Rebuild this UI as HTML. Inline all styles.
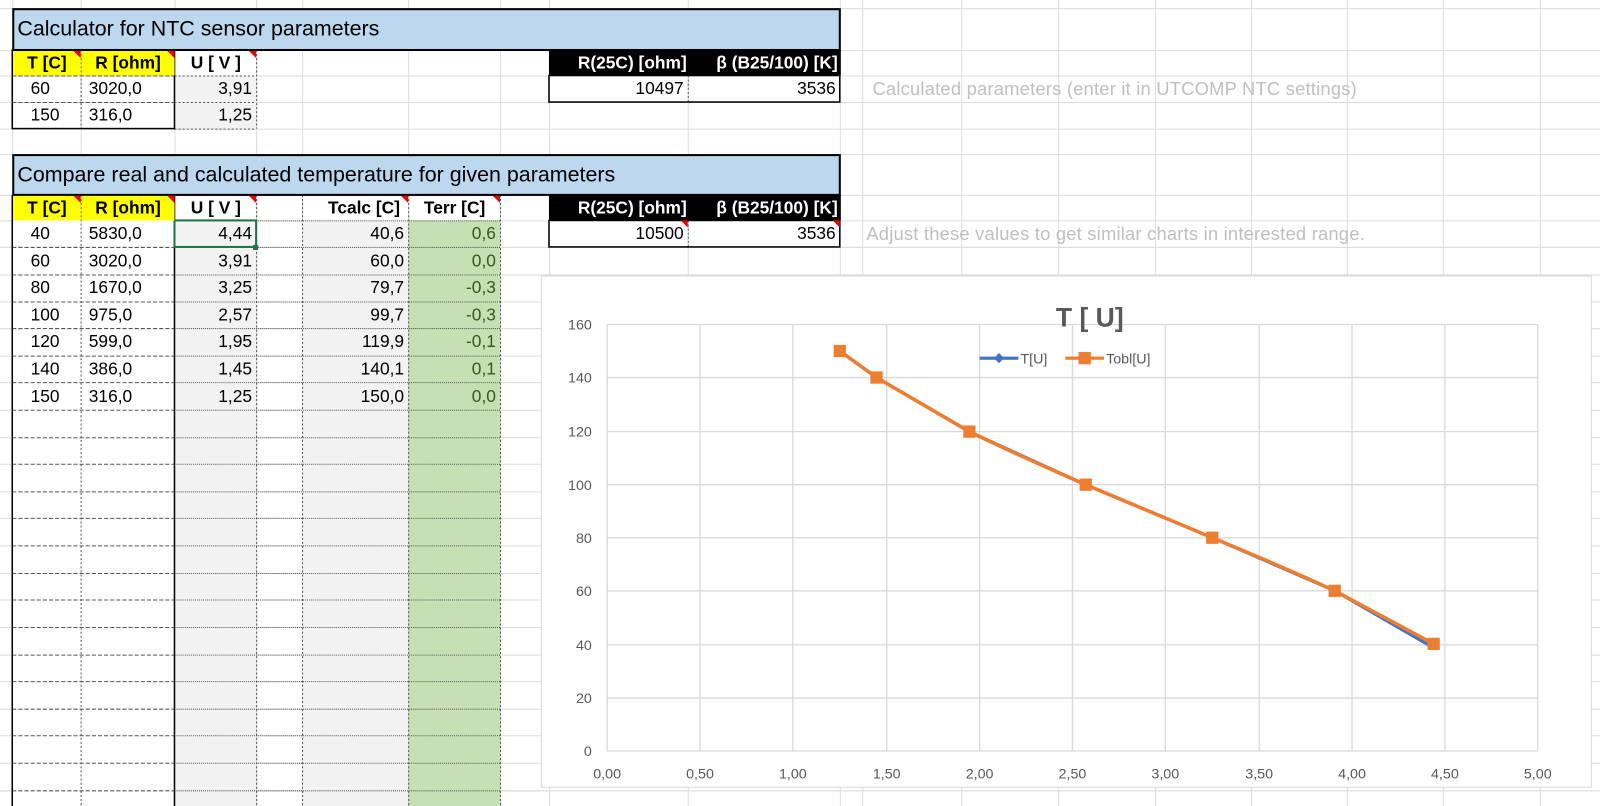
<!DOCTYPE html>
<html><head><meta charset="utf-8"><style>
html,body{margin:0;padding:0;background:#fff;overflow:hidden;width:1600px;height:806px}
#w{position:absolute;left:0;top:0;width:1568px;height:790px;transform:scale(1.0204);transform-origin:0 0;font-family:"Liberation Sans",sans-serif;}
.c{position:absolute;box-sizing:border-box;font-size:17px;line-height:26px;white-space:nowrap;overflow:visible}
.b{font-weight:bold}
.r{text-align:right;padding-right:4px}
.tri{position:absolute;right:0;top:0;width:0;height:0;border-top:7px solid #e00;border-left:7px solid transparent}
.g{color:#bfbfbf;font-size:18px;letter-spacing:0.2px}
</style></head><body><div id="w">
<svg width="1568" height="790" style="position:absolute;left:0;top:0">
<g stroke="#dcdcdc" stroke-width="1">
<line x1="0" y1="8.5" x2="1568" y2="8.5"/><line x1="0" y1="49.5" x2="1568" y2="49.5"/><line x1="0" y1="74.5" x2="1568" y2="74.5"/><line x1="0" y1="100.5" x2="1568" y2="100.5"/><line x1="0" y1="126.5" x2="1568" y2="126.5"/><line x1="0" y1="151.5" x2="1568" y2="151.5"/><line x1="0" y1="191.5" x2="1568" y2="191.5"/><line x1="0" y1="216.5" x2="1568" y2="216.5"/>
<line x1="0" y1="242.5" x2="1568" y2="242.5"/><line x1="0" y1="269.5" x2="1568" y2="269.5"/>
<line x1="0" y1="296" x2="530" y2="296"/><line x1="0" y1="322" x2="530" y2="322"/><line x1="0" y1="349" x2="530" y2="349"/><line x1="0" y1="375" x2="530" y2="375"/><line x1="0" y1="402" x2="530" y2="402"/><line x1="0" y1="429" x2="530" y2="429"/><line x1="0" y1="455" x2="530" y2="455"/><line x1="0" y1="482" x2="530" y2="482"/><line x1="0" y1="508" x2="530" y2="508"/><line x1="0" y1="535" x2="530" y2="535"/><line x1="0" y1="562" x2="530" y2="562"/><line x1="0" y1="588" x2="530" y2="588"/><line x1="0" y1="615" x2="530" y2="615"/><line x1="0" y1="642" x2="530" y2="642"/><line x1="0" y1="668" x2="530" y2="668"/><line x1="0" y1="695" x2="530" y2="695"/><line x1="0" y1="721" x2="530" y2="721"/><line x1="0" y1="748" x2="530" y2="748"/><line x1="0" y1="775" x2="530" y2="775"/>
<line x1="1560" y1="296" x2="1568" y2="296"/><line x1="1560" y1="322" x2="1568" y2="322"/><line x1="1560" y1="349" x2="1568" y2="349"/><line x1="1560" y1="375" x2="1568" y2="375"/><line x1="1560" y1="402" x2="1568" y2="402"/><line x1="1560" y1="429" x2="1568" y2="429"/><line x1="1560" y1="455" x2="1568" y2="455"/><line x1="1560" y1="482" x2="1568" y2="482"/><line x1="1560" y1="508" x2="1568" y2="508"/><line x1="1560" y1="535" x2="1568" y2="535"/><line x1="1560" y1="562" x2="1568" y2="562"/><line x1="1560" y1="588" x2="1568" y2="588"/><line x1="1560" y1="615" x2="1568" y2="615"/><line x1="1560" y1="642" x2="1568" y2="642"/><line x1="1560" y1="668" x2="1568" y2="668"/><line x1="1560" y1="695" x2="1568" y2="695"/><line x1="1560" y1="721" x2="1568" y2="721"/><line x1="1560" y1="748" x2="1568" y2="748"/>
<line x1="0" y1="775" x2="1568" y2="775"/>
<line x1="12.5" y1="0" x2="12.5" y2="790"/><line x1="79.5" y1="0" x2="79.5" y2="790"/><line x1="171.5" y1="0" x2="171.5" y2="790"/><line x1="251.5" y1="0" x2="251.5" y2="790"/><line x1="296.5" y1="0" x2="296.5" y2="790"/><line x1="400.5" y1="0" x2="400.5" y2="790"/><line x1="490.5" y1="0" x2="490.5" y2="790"/><line x1="538.5" y1="0" x2="538.5" y2="790"/><line x1="674.5" y1="0" x2="674.5" y2="790"/><line x1="823.5" y1="0" x2="823.5" y2="790"/><line x1="845.5" y1="0" x2="845.5" y2="790"/><line x1="942.5" y1="0" x2="942.5" y2="790"/><line x1="1037.5" y1="0" x2="1037.5" y2="790"/><line x1="1132.5" y1="0" x2="1132.5" y2="790"/><line x1="1226.5" y1="0" x2="1226.5" y2="790"/><line x1="1320.5" y1="0" x2="1320.5" y2="790"/><line x1="1414.5" y1="0" x2="1414.5" y2="790"/><line x1="1509.5" y1="0" x2="1509.5" y2="790"/>
</g>
<rect x="171" y="216" width="80" height="574" fill="#f2f2f2"/>
<rect x="296" y="216" width="104" height="574" fill="#f2f2f2"/>
<rect x="400" y="216" width="90" height="574" fill="#c6e0b4"/>
<rect x="12" y="216" width="159" height="574" fill="#fff"/>
<rect x="171" y="74" width="80" height="52" fill="#f2f2f2"/>
<g stroke="#555" stroke-width="1" stroke-dasharray="2,2" fill="none">
<line x1="79.5" y1="49" x2="79.5" y2="126"/>
<line x1="79.5" y1="191" x2="79.5" y2="790"/>
<line x1="251.5" y1="49" x2="251.5" y2="126"/><line x1="171" y1="126.5" x2="251" y2="126.5"/><line x1="171" y1="74.5" x2="251" y2="74.5"/><line x1="171" y1="100.5" x2="251" y2="100.5"/>
<line x1="12" y1="74.5" x2="171" y2="74.5" stroke-dasharray="4,2"/><line x1="12" y1="100.5" x2="171" y2="100.5" stroke-dasharray="4,2"/>
<line x1="251.5" y1="191" x2="251.5" y2="790"/><line x1="296.5" y1="191" x2="296.5" y2="790"/><line x1="400.5" y1="191" x2="400.5" y2="790"/><line x1="490.5" y1="191" x2="490.5" y2="790"/>
<line x1="674.5" y1="74" x2="674.5" y2="100"/>
<line x1="674.5" y1="216" x2="674.5" y2="242"/>
</g>
<g stroke="#555" stroke-width="1" stroke-dasharray="1,1">
<line x1="171" y1="216.5" x2="490" y2="216.5"/><line x1="171" y1="242.5" x2="490" y2="242.5"/><line x1="171" y1="269.5" x2="490" y2="269.5"/><line x1="171" y1="296" x2="490" y2="296"/><line x1="171" y1="322" x2="490" y2="322"/><line x1="171" y1="349" x2="490" y2="349"/><line x1="171" y1="375" x2="490" y2="375"/><line x1="171" y1="402" x2="490" y2="402"/><line x1="171" y1="429" x2="490" y2="429"/><line x1="171" y1="455" x2="490" y2="455"/><line x1="171" y1="482" x2="490" y2="482"/><line x1="171" y1="508" x2="490" y2="508"/><line x1="171" y1="535" x2="490" y2="535"/><line x1="171" y1="562" x2="490" y2="562"/><line x1="171" y1="588" x2="490" y2="588"/><line x1="171" y1="615" x2="490" y2="615"/><line x1="171" y1="642" x2="490" y2="642"/><line x1="171" y1="668" x2="490" y2="668"/><line x1="171" y1="695" x2="490" y2="695"/><line x1="171" y1="721" x2="490" y2="721"/><line x1="171" y1="748" x2="490" y2="748"/><line x1="171" y1="775" x2="490" y2="775"/>
</g>
<g stroke="#555" stroke-width="1" stroke-dasharray="4,2">
<line x1="12" y1="242.5" x2="171" y2="242.5"/><line x1="12" y1="269.5" x2="171" y2="269.5"/><line x1="12" y1="296" x2="171" y2="296"/><line x1="12" y1="322" x2="171" y2="322"/><line x1="12" y1="349" x2="171" y2="349"/><line x1="12" y1="375" x2="171" y2="375"/><line x1="12" y1="402" x2="171" y2="402"/><line x1="12" y1="429" x2="171" y2="429"/><line x1="12" y1="455" x2="171" y2="455"/><line x1="12" y1="482" x2="171" y2="482"/><line x1="12" y1="508" x2="171" y2="508"/><line x1="12" y1="535" x2="171" y2="535"/><line x1="12" y1="562" x2="171" y2="562"/><line x1="12" y1="588" x2="171" y2="588"/><line x1="12" y1="615" x2="171" y2="615"/><line x1="12" y1="642" x2="171" y2="642"/><line x1="12" y1="668" x2="171" y2="668"/><line x1="12" y1="695" x2="171" y2="695"/><line x1="12" y1="721" x2="171" y2="721"/><line x1="12" y1="748" x2="171" y2="748"/><line x1="12" y1="775" x2="171" y2="775"/>
</g>
<g stroke="#000" stroke-width="1.5" fill="none">
<rect x="12" y="49" width="159" height="77"/>
<line x1="12" y1="191" x2="12" y2="790"/><line x1="171" y1="191" x2="171" y2="790"/>
<rect x="538" y="74" width="285" height="26"/>
<rect x="538" y="216" width="285" height="26"/>
</g>
<rect x="171" y="216" width="80" height="26" fill="none" stroke="#217346" stroke-width="2"/>
<rect x="248" y="240" width="5" height="5" fill="#217346"/>
</svg>

<div class="c" style="left:12px;top:8px;width:812px;height:42px;background:#bdd7ee;border:2px solid #000;font-size:21px;line-height:38px;padding-left:3px">Calculator for NTC sensor parameters</div>
<div class="c b" style="left:13px;top:50px;width:66px;height:24px;background:#ff0;text-align:center;line-height:24px">T [C]<span class="tri"></span></div>
<div class="c b" style="left:80px;top:50px;width:91px;height:24px;background:#ff0;text-align:center;line-height:24px">R [ohm]<span class="tri"></span></div>
<div class="c b" style="left:172px;top:50px;width:79px;height:24px;text-align:center;line-height:24px">U [ V ]<span class="tri"></span></div>
<div class="c" style="left:12px;top:74px;width:67px;height:26px;padding-left:18px">60</div>
<div class="c" style="left:79px;top:74px;width:92px;height:26px;padding-left:8px">3020,0</div>
<div class="c r" style="left:171px;top:74px;width:80px;height:26px">3,91</div>
<div class="c" style="left:12px;top:100px;width:67px;height:26px;padding-left:18px">150</div>
<div class="c" style="left:79px;top:100px;width:92px;height:26px;padding-left:8px">316,0</div>
<div class="c r" style="left:171px;top:100px;width:80px;height:26px">1,25</div>

<div class="c b" style="left:538px;top:49px;width:286px;height:25px;background:#000;color:#fff;line-height:25px"><span style="position:absolute;right:151px">R(25C) [ohm]</span><span style="position:absolute;right:3px">β (B25/100) [K]</span></div>
<div class="c r" style="left:538px;top:74px;width:136px;height:26px">10497</div>
<div class="c r" style="left:674px;top:74px;width:149px;height:26px">3536</div>
<div class="c g" style="left:855px;top:74px;height:26px">Calculated parameters (enter it in UTCOMP NTC settings)</div>

<div class="c" style="left:12px;top:151px;width:812px;height:41px;background:#bdd7ee;border:2px solid #000;font-size:21px;line-height:37px;padding-left:3px">Compare real and calculated temperature for given parameters</div>
<div class="c b" style="left:13px;top:192px;width:66px;height:24px;background:#ff0;text-align:center;line-height:24px">T [C]<span class="tri"></span></div>
<div class="c b" style="left:80px;top:192px;width:91px;height:24px;background:#ff0;text-align:center;line-height:24px">R [ohm]<span class="tri"></span></div>
<div class="c b" style="left:172px;top:192px;width:79px;height:24px;text-align:center;line-height:24px">U [ V ]<span class="tri"></span></div>
<div class="c b" style="left:297px;top:192px;width:103px;height:24px;text-align:right;padding-right:8px;line-height:24px">Tcalc [C]<span class="tri"></span></div>
<div class="c b" style="left:401px;top:192px;width:89px;height:24px;text-align:center;line-height:24px">Terr [C]<span class="tri"></span></div>
<div class="c b" style="left:538px;top:191px;width:286px;height:25px;background:#000;color:#fff;line-height:25px"><span style="position:absolute;right:151px">R(25C) [ohm]</span><span style="position:absolute;right:3px">β (B25/100) [K]</span></div>
<div class="c r" style="left:538px;top:216px;width:136px;height:26px">10500<span class="tri"></span></div>
<div class="c r" style="left:674px;top:216px;width:149px;height:26px">3536<span class="tri"></span></div>
<div class="c g" style="left:849px;top:216px;height:26px">Adjust these values to get similar charts in interested range.</div>

<div style="position:absolute;left:0;top:216px">
<div class="c" style="left:12px;top:0px;padding-left:18px">40</div><div class="c" style="left:79px;top:0px;padding-left:8px">5830,0</div><div class="c r" style="left:171px;top:0px;width:80px">4,44</div><div class="c r" style="left:296px;top:0px;width:104px">40,6</div><div class="c r" style="left:400px;top:0px;width:90px;color:#375623">0,6</div>
<div class="c" style="left:12px;top:26.6px;padding-left:18px">60</div><div class="c" style="left:79px;top:26.6px;padding-left:8px">3020,0</div><div class="c r" style="left:171px;top:26.6px;width:80px">3,91</div><div class="c r" style="left:296px;top:26.6px;width:104px">60,0</div><div class="c r" style="left:400px;top:26.6px;width:90px;color:#375623">0,0</div>
<div class="c" style="left:12px;top:53.2px;padding-left:18px">80</div><div class="c" style="left:79px;top:53.2px;padding-left:8px">1670,0</div><div class="c r" style="left:171px;top:53.2px;width:80px">3,25</div><div class="c r" style="left:296px;top:53.2px;width:104px">79,7</div><div class="c r" style="left:400px;top:53.2px;width:90px;color:#375623">-0,3</div>
<div class="c" style="left:12px;top:79.8px;padding-left:18px">100</div><div class="c" style="left:79px;top:79.8px;padding-left:8px">975,0</div><div class="c r" style="left:171px;top:79.8px;width:80px">2,57</div><div class="c r" style="left:296px;top:79.8px;width:104px">99,7</div><div class="c r" style="left:400px;top:79.8px;width:90px;color:#375623">-0,3</div>
<div class="c" style="left:12px;top:106.4px;padding-left:18px">120</div><div class="c" style="left:79px;top:106.4px;padding-left:8px">599,0</div><div class="c r" style="left:171px;top:106.4px;width:80px">1,95</div><div class="c r" style="left:296px;top:106.4px;width:104px">119,9</div><div class="c r" style="left:400px;top:106.4px;width:90px;color:#375623">-0,1</div>
<div class="c" style="left:12px;top:133px;padding-left:18px">140</div><div class="c" style="left:79px;top:133px;padding-left:8px">386,0</div><div class="c r" style="left:171px;top:133px;width:80px">1,45</div><div class="c r" style="left:296px;top:133px;width:104px">140,1</div><div class="c r" style="left:400px;top:133px;width:90px;color:#375623">0,1</div>
<div class="c" style="left:12px;top:159.6px;padding-left:18px">150</div><div class="c" style="left:79px;top:159.6px;padding-left:8px">316,0</div><div class="c r" style="left:171px;top:159.6px;width:80px">1,25</div><div class="c r" style="left:296px;top:159.6px;width:104px">150,0</div><div class="c r" style="left:400px;top:159.6px;width:90px;color:#375623">0,0</div>
</div>

<svg width="1568" height="790" style="position:absolute;left:0;top:0" font-family="Liberation Sans, sans-serif">
<rect x="530.5" y="270.5" width="1029" height="501" fill="#fff" stroke="#d9d9d9"/>
<g stroke="#d9d9d9" stroke-width="1.3">
<line x1="595" y1="318" x2="1507" y2="318"/><line x1="595" y1="370" x2="1507" y2="370"/><line x1="595" y1="423" x2="1507" y2="423"/><line x1="595" y1="475" x2="1507" y2="475"/><line x1="595" y1="527" x2="1507" y2="527"/><line x1="595" y1="579" x2="1507" y2="579"/><line x1="595" y1="632" x2="1507" y2="632"/><line x1="595" y1="684" x2="1507" y2="684"/><line x1="595" y1="736" x2="1507" y2="736"/>
<line x1="595" y1="318" x2="595" y2="736"/><line x1="686" y1="318" x2="686" y2="736"/><line x1="777" y1="318" x2="777" y2="736"/><line x1="869" y1="318" x2="869" y2="736"/><line x1="960" y1="318" x2="960" y2="736"/><line x1="1051" y1="318" x2="1051" y2="736"/><line x1="1142" y1="318" x2="1142" y2="736"/><line x1="1234" y1="318" x2="1234" y2="736"/><line x1="1325" y1="318" x2="1325" y2="736"/><line x1="1416" y1="318" x2="1416" y2="736"/><line x1="1507" y1="318" x2="1507" y2="736"/>
</g>
<g font-size="14" fill="#595959" text-anchor="end">
<text x="580" y="323">160</text><text x="580" y="375">140</text><text x="580" y="428">120</text><text x="580" y="480">100</text><text x="580" y="532">80</text><text x="580" y="584">60</text><text x="580" y="637">40</text><text x="580" y="689">20</text><text x="580" y="741">0</text>
</g>
<g font-size="14" fill="#595959" text-anchor="middle">
<text x="595" y="763">0,00</text><text x="686" y="763">0,50</text><text x="777" y="763">1,00</text><text x="869" y="763">1,50</text><text x="960" y="763">2,00</text><text x="1051" y="763">2,50</text><text x="1142" y="763">3,00</text><text x="1234" y="763">3,50</text><text x="1325" y="763">4,00</text><text x="1416" y="763">4,50</text><text x="1507" y="763">5,00</text>
</g>
<text x="1068" y="320" font-size="26" font-weight="bold" fill="#595959" text-anchor="middle">T [ U]</text>
<line x1="960" y1="351" x2="998" y2="351" stroke="#4472c4" stroke-width="3"/>
<path d="M979 346 L984 351 L979 356 L974 351Z" fill="#4472c4"/>
<text x="1000" y="356" font-size="14" fill="#595959">T[U]</text>
<line x1="1044" y1="351" x2="1082" y2="351" stroke="#ed7d31" stroke-width="3"/>
<rect x="1057" y="345" width="12" height="12" fill="#ed7d31"/>
<text x="1084" y="356" font-size="14" fill="#595959">Tobl[U]</text>
<path d="M1405 635 L1308 579 L1188 527 L1064 475 L950 423 L859 370 L823 344" fill="none" stroke="#4472c4" stroke-width="3"/>
<path d="M1405 631 L1308 579 C1250 552 1190 528 1064 475 C1000 447 960 428 950 423 L859 370 L823 344" fill="none" stroke="#ed7d31" stroke-width="3.5"/>
<g fill="#ed7d31">
<rect x="1399" y="625" width="12" height="12"/><rect x="1302" y="573" width="12" height="12"/><rect x="1182" y="521" width="12" height="12"/><rect x="1058" y="469" width="12" height="12"/><rect x="944" y="417" width="12" height="12"/><rect x="853" y="364" width="12" height="12"/><rect x="817" y="338" width="12" height="12"/>
</g>
</svg>
</div></body></html>
